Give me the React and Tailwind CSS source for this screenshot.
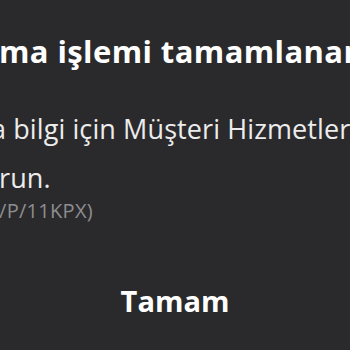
export default function App() {
  return (
    <div className="h-[350px] w-[350px] overflow-hidden bg-[#2a2a2c] font-['Open_Sans',sans-serif] text-white">
      <div className="flex flex-col pt-[33px]">
        <div className="whitespace-nowrap text-[31px] font-bold leading-[36px] tracking-[0.4px] -ml-[1px]">
          ma işlemi tamamlanamadı
        </div>

        <div className="mt-[44px] whitespace-nowrap text-[27px] leading-[32px] tracking-[0.1px] text-[#ececec] -ml-[9px]">
          a bilgi için Müşteri Hizmetleri'ne
        </div>
        <div className="mt-[17px] whitespace-nowrap text-[27px] leading-[32px] tracking-[0.1px] text-[#ececec] -ml-[1px]">
          run.
        </div>
        <div className="mt-[5px] whitespace-nowrap text-[20px] leading-[24px] tracking-[0.3px] text-[#8d8d90] -ml-[1px]">
          /P/11KPX)
        </div>

        <button
          type="button"
          className="mt-[60px] w-full text-center text-[29px] font-bold leading-[36px] text-white"
        >
          Tamam
        </button>
      </div>
    </div>
  );
}
